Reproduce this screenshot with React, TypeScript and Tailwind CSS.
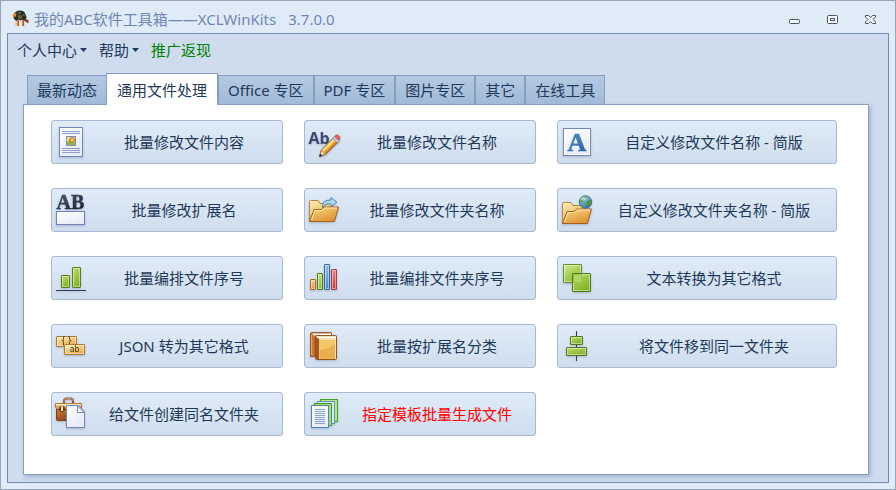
import { useState, type ReactNode } from "react";

const serif = "'Liberation Serif', serif";
const sans = "'Open Sans', 'Liberation Sans', sans-serif";
const mono = "'DejaVu Sans Mono', monospace";

function Gradients() {
  const list: [string, string, string][] = [
    ["gGold", "#fff0b8", "#e7a94a"],
    ["gAmber", "#ffd98a", "#dc9332"],
    ["gGreen", "#d3ec93", "#86b82b"],
    ["gLime", "#c0e070", "#7fb126"],
    ["gBlue", "#a9d0f2", "#4186c8"],
    ["gRed", "#f09a90", "#c8322c"],
    ["gOrange", "#ffe0b0", "#e08a30"],
    ["gPaper", "#ffffff", "#e6ebf7"],
    ["gLeather", "#d98a4c", "#8c3d16"],
    ["gInk", "#59607a", "#1c2238"],
    ["gLetter", "#5f9bd4", "#2b62a8"],
    ["gGlobe", "#b9e2f7", "#2e6da8"],
  ];
  return (
    <svg width="0" height="0" className="absolute" aria-hidden="true">
      <defs>
        {list.map(([id, from, to]) => (
          <linearGradient key={id} id={id} x1="0" y1="0" x2="0.6" y2="1">
            <stop offset="0" stopColor={from} />
            <stop offset="1" stopColor={to} />
          </linearGradient>
        ))}
      </defs>
    </svg>
  );
}

function Icon({ children }: { children: ReactNode }) {
  return (
    <svg
      width="32"
      height="32"
      viewBox="0 0 32 32"
      fill="none"
      aria-hidden="true"
      className="shrink-0 overflow-visible drop-shadow-[0_1px_1px_rgba(40,60,100,0.25)]"
    >
      {children}
    </svg>
  );
}

const DocumentIcon = () => (
  <Icon>
    <rect x="4.5" y="1.5" width="23" height="29" fill="url(#gPaper)" stroke="#7387bd" />
    <path d="M7 5.500h18M7 7.500h18M7 22.500h18M7 24.500h18M7 26.500h18" stroke="#8c9dc9" />
    <rect x="11.500" y="10.500" width="9" height="9" fill="#f6e28b" stroke="#7d8fc0" />
    <path d="M12 19v-3l3-2 2 3 3-1v3z" fill="#8fb944" />
    <circle cx="17" cy="14" r="2.600" fill="#f0a52e" stroke="#c0731c" strokeWidth="0.800" />
    <circle cx="17" cy="14" r="0.900" fill="#fff0a0" />
  </Icon>
);

const ExtensionIcon = () => (
  <Icon>
    <text x="15.500" y="15" textAnchor="middle" fontFamily={serif} fontWeight="700" fontSize="20" fill="url(#gInk)" stroke="#2c3248" strokeWidth="0.400">
      AB
    </text>
    <rect x="1.500" y="17.500" width="28" height="13" fill="url(#gPaper)" stroke="#7084b8" />
  </Icon>
);

const RenameIcon = () => (
  <Icon>
    <text x="0.500" y="17.500" fontFamily={sans} fontWeight="700" fontSize="16" fill="#3d4a6e">
      Ab
    </text>
    <path d="M11.500 30.500l1.800-6.500L26 11.500l4.500 4.300L17.800 28.200z" fill="#f5ab35" stroke="#9a5a1c" strokeWidth="0.900" />
    <path d="M14.800 25L26.800 13" stroke="#ffe39a" strokeWidth="1.800" />
    <path d="M17.500 27L29 15.800" stroke="#c9701a" strokeWidth="1.200" />
    <path d="M11.500 30.500l1.800-6.200 4.300 3.800z" fill="#f3dcb8" stroke="#8a5a30" strokeWidth="0.600" />
    <path d="M11.300 30.800l.9-3 2.200 1.900z" fill="#20263c" />
    <path d="M24.800 12.300l2-2 4.700 4.500-2 2z" fill="#c5d2ea" stroke="#7b8cb5" strokeWidth="0.800" />
    <path d="M26.800 10.300l1-1q1.600-1 3.200.6 1.700 1.800.6 3.300l-1 1.200z" fill="#ec6a5c" stroke="#b63b34" strokeWidth="0.700" />
  </Icon>
);

const FolderShape = ({ y }: { y: number }) => (
  <g transform={`translate(0 ${y})`}>
    <path d="M1.500 21.500v-20q0-1 1-1h7.500l2 3h11.500q1 0 1 1v16z" fill="url(#gGold)" stroke="#c08038" />
    <path d="M1.500 21.500L6 9.500h7l3-2.500h14.500L26.500 21.500z" fill="url(#gAmber)" stroke="#a65f1e" />
    <path d="M3.500 20l3.400-9.500h6.600l3-2.500H29" stroke="#ffeebb" strokeWidth="0.900" />
  </g>
);

const FolderArrowIcon = () => (
  <Icon>
    <FolderShape y={6} />
    <path
      d="M14.500 13.500Q14 5.500 23 6V3.500l5.800 4.700-5.800 4.500V10Q17.500 9 14.500 13.500z"
      fill="#a9dbf5"
      stroke="#4382b0"
      strokeWidth="0.900"
    />
  </Icon>
);

const FolderGlobeIcon = () => (
  <Icon>
    <FolderShape y={8} />
    <circle cx="24.500" cy="8" r="6.200" fill="url(#gGlobe)" stroke="#3d6488" strokeWidth="0.900" />
    <path d="M20 4.500q3-2.500 5.500-1.800l-.8 2.400-2.300 1-.6 2.400-2 .4q-1.400-2 .2-4.400z" fill="#62a83c" />
    <path d="M26.500 6.500l3.200-.6q1 2.200-.2 4.700l-2.300 1.800-1.600-2.600z" fill="#4d9433" />
    <path d="M21 10.500l2.600.4.300 2.600q-2-.6-2.900-3z" fill="#62a83c" />
    <ellipse cx="22.500" cy="4.800" rx="2.800" ry="1.800" fill="#ffffff" fillOpacity="0.500" />
  </Icon>
);

const LetterIcon = () => (
  <Icon>
    <rect x="2.500" y="2.500" width="27" height="27" fill="url(#gPaper)" stroke="#7387bd" />
    <rect x="3.500" y="3.500" width="25" height="25" stroke="#ffffff" />
    <text x="16" y="24.500" textAnchor="middle" fontFamily={serif} fontWeight="700" fontSize="26" fill="url(#gLetter)" stroke="#3a74b6" strokeWidth="0.600">
      A
    </text>
  </Icon>
);

type BlockProps = { x: number; y: number; w: number; h: number; fill: string; stroke: string };
const Block = ({ x, y, w, h, fill, stroke }: BlockProps) => (
  <g>
    <rect x={x + 0.5} y={y + 0.5} width={w - 1} height={h - 1} rx="0.500" fill={fill} stroke={stroke} />
    <rect x={x + 1.5} y={y + 1.5} width={w - 3} height={h - 3} stroke="#ffffff" strokeOpacity="0.450" />
  </g>
);

const TwoBarsIcon = () => (
  <Icon>
    <Block x={6} y={13} w={9} h={13} fill="url(#gLime)" stroke="#5a7f1e" />
    <Block x={17} y={5} w={9} h={21} fill="url(#gLime)" stroke="#5a7f1e" />
    <path d="M1 28.500h30" stroke="#2d3a5c" />
  </Icon>
);

const ColorBarsIcon = () => (
  <Icon>
    <Block x={2} y={17} w={6} h={11} fill="url(#gOrange)" stroke="#b8631f" />
    <Block x={9} y={11} w={6} h={17} fill="url(#gGreen)" stroke="#4f7a1a" />
    <Block x={16} y={2} w={6} h={26} fill="url(#gBlue)" stroke="#3a68a8" />
    <Block x={23} y={7} w={6} h={21} fill="url(#gRed)" stroke="#b03a38" />
  </Icon>
);

const SquaresIcon = () => (
  <Icon>
    <Block x={2} y={2} w={19} h={19} fill="url(#gGreen)" stroke="#64902a" />
    <Block x={11} y={11} w={19} h={19} fill="url(#gLime)" stroke="#4f7a1a" />
    <rect x="12.500" y="12.500" width="8" height="8" fill="#b0d367" stroke="#9cc650" />
  </Icon>
);

const JsonIcon = () => (
  <Icon>
    <Block x={1} y={6} w={21} h={11} fill="url(#gGold)" stroke="#b5782f" />
    <text x="11.500" y="14" textAnchor="middle" fontFamily={sans} fontSize="10" fill="#3c3428">
      {"{ }"}
    </text>
    <Block x={9} y={14} w={21} h={11} fill="url(#gGold)" stroke="#b5782f" />
    <text x="19.500" y="22" textAnchor="middle" fontFamily={mono} fontSize="8" fill="#3c3428">
      ab
    </text>
  </Icon>
);

const BooksIcon = () => (
  <Icon>
    <path d="M2.500 26.500V3.500q0-1 1-1h19q1 0 1 1v3H7v20z" fill="#c87a35" stroke="#9a5522" />
    <path d="M4 3.500h19v2H6z" fill="#ffffff" />
    <path d="M3.500 5v20" stroke="#e8a664" />
    <path d="M7.500 28.500V6.500q0-1 1-1h19q1 0 1 1v22q0 1-1 1h-19q-1 0-1-1z" fill="#f3c468" stroke="#9a5522" />
    <path d="M9 6.500h19v2H10z" fill="#ffffff" />
    <path d="M8 7l3 2v20H8z" fill="#a4561f" />
    <path d="M11.500 9.500H27.500V28.500" stroke="#ffe2a4" />
    <path d="M12 20q9-1 15-6v15H12z" fill="#e3a040" fillOpacity="0.600" />
  </Icon>
);

const AlignIcon = () => (
  <Icon>
    <path d="M15.500 1v30" stroke="#2d3a5c" />
    <Block x={9} y={6} w={13} h={9} fill="url(#gLime)" stroke="#4f7a1a" />
    <Block x={5} y={17} w={21} h={9} fill="url(#gLime)" stroke="#4f7a1a" />
  </Icon>
);

const BriefcaseIcon = () => (
  <Icon>
    <path d="M9 5V3q0-2.500 3-2.500h3q3 0 3 2.500v2" stroke="#8a5434" strokeWidth="2" />
    <path d="M9 4.500V3q0-2.500 3-2.500h3q3 0 3 2.500" stroke="#dba27c" strokeWidth="0.800" />
    <rect x="1.500" y="8.500" width="24" height="14" rx="1" fill="url(#gLeather)" stroke="#7f3c18" />
    <path d="M.500 5.500h26v4l-2 2H3l-2.500-2z" fill="#e2a45c" stroke="#b8783a" />
    <path d="M1 6h25v1.500H1z" fill="#ffedc0" />
    <path d="M3 11.500h22" stroke="#6a3010" />
    <circle cx="7" cy="11" r="3" fill="#6e3414" />
    <path d="M6 8.500h2v4.500H6z" fill="#fff3c0" />
    <path d="M11.500 7.500h12l6 6v16h-18z" fill="url(#gPaper)" stroke="#7387bd" />
    <path d="M22.500 8v6.500h6.500z" fill="#ffffff" stroke="#7387bd" />
  </Icon>
);

const StackIcon = () => (
  <Icon>
    <rect x="12.500" y="1.500" width="17" height="22" fill="#b7e389" stroke="#4aa026" />
    <rect x="9.500" y="3.500" width="17" height="22" fill="#d5e6f8" stroke="#6592cb" />
    <rect x="6.500" y="5.500" width="17" height="22" fill="#a4d870" stroke="#4aa026" />
    <rect x="3.500" y="7.500" width="17" height="22" fill="url(#gPaper)" stroke="#5784c0" />
    <path
      d="M7 11.500h10M7 13.500h10M7 15.500h10M7 17.500h10M7 19.500h10M7 21.500h10M7 23.500h10M7 25.500h10"
      stroke="#7fa3d2"
    />
  </Icon>
);

function AppLogo() {
  return (
    <svg width="18" height="18" viewBox="0 0 18 18" aria-hidden="true" className="shrink-0">
      <path d="M4 9l-1.500 5.500L4 16.500h2.500L7 10zM9 10l1 6.500h3L12 9z" fill="#f3c9a4" />
      <path d="M1.500 5Q3 .500 8 .500q4.500 0 5.500 4 1.500 2 .5 4.500l-2 2.500-1.500-2-2 1-2-1-2 1.500-2-1.500Q.500 7.500 1.500 5z" fill="#262b22" />
      <path d="M.500 4.500l2-2 2 1-.5 3-2.500.5z" fill="#e8873a" />
      <path d="M5.500 2l3-.5 1 1.500-3 1.500zM10.500 4l2.500.5-.5 2-2-.5z" fill="#4b6f4a" />
      <path d="M5.500 5.500l3-.5 2 2-1.500 2-3-.5z" fill="#7b5a3b" />
      <path d="M5.500 10l1.500.5v5.500H5.500zM10.500 10.500l1.500-.5v6h-1.500z" fill="#b95420" />
      <path d="M12.500 8.500l4 1.500v3h-1.500l-2.500-2.500z" fill="#8f4527" />
    </svg>
  );
}

const Caret = () => (
  <svg width="7" height="4" viewBox="0 0 7 4" aria-hidden="true" className="fill-[#1e395b]">
    <path d="M0 0h7L3.500 4z" />
  </svg>
);

const tabs = ["最新动态", "通用文件处理", "Office 专区", "PDF 专区", "图片专区", "其它", "在线工具"];

const tools: { label: string; icon: ReactNode; hot?: boolean }[] = [
  { label: "批量修改文件内容", icon: <DocumentIcon /> },
  { label: "批量修改文件名称", icon: <RenameIcon /> },
  { label: "自定义修改文件名称 - 简版", icon: <LetterIcon /> },
  { label: "批量修改扩展名", icon: <ExtensionIcon /> },
  { label: "批量修改文件夹名称", icon: <FolderArrowIcon /> },
  { label: "自定义修改文件夹名称 - 简版", icon: <FolderGlobeIcon /> },
  { label: "批量编排文件序号", icon: <TwoBarsIcon /> },
  { label: "批量编排文件夹序号", icon: <ColorBarsIcon /> },
  { label: "文本转换为其它格式", icon: <SquaresIcon /> },
  { label: "JSON 转为其它格式", icon: <JsonIcon /> },
  { label: "批量按扩展名分类", icon: <BooksIcon /> },
  { label: "将文件移到同一文件夹", icon: <AlignIcon /> },
  { label: "给文件创建同名文件夹", icon: <BriefcaseIcon /> },
  { label: "指定模板批量生成文件", icon: <StackIcon />, hot: true },
];

function TitleBar() {
  return (
    <header className="flex h-8 items-center justify-between pt-1 pr-3 pl-[5px]">
      <h1 className="flex items-center gap-1 text-[15px] leading-5 text-[#6f86b4]">
        <AppLogo />
        <span>我的ABC软件工具箱——XCLWinKits</span>
        <span className="pl-2">3.7.0.0</span>
      </h1>
      <div className="flex gap-[26px]">
        <button type="button" aria-label="最小化">
          <svg width="12" height="12" viewBox="0 0 12 12" fill="#f4f8fd" stroke="#4a5263">
            <rect x="0.500" y="6.500" width="10" height="4" rx="1" />
          </svg>
        </button>
        <button type="button" aria-label="最大化">
          <svg width="12" height="12" viewBox="0 0 12 12" fill="#f4f8fd" stroke="#4a5263">
            <rect x="0.500" y="2.500" width="10" height="8" rx="1" />
            <rect x="3.500" y="5.500" width="4" height="2" />
          </svg>
        </button>
        <button type="button" aria-label="关闭">
          <svg width="12" height="12" viewBox="0 0 12 12" fill="#f4f8fd" stroke="#4a5263">
            <path d="M.500 2.500h3l2 2 2-2h3v1.500L8 6.500l2.500 2.500v1.500h-3l-2-2-2 2h-3V9L3 6.500.500 4z" />
          </svg>
        </button>
      </div>
    </header>
  );
}

export default function App() {
  const [active, setActive] = useState(1);
  return (
    <div className="flex min-h-screen flex-col border border-[#98a7b8] bg-[#dfebf7] px-1.5 pb-1.5 font-['Noto_Sans','Noto_Sans_CJK_SC',sans-serif] text-[15px] leading-5 text-[#1e395b]">
      <Gradients />
      <TitleBar />
      <main className="flex flex-1 flex-col border border-[#6f8db3] bg-[#cfdcee] pr-[19px] pb-[7px] pl-[15px]">
        <nav className="-ml-1.5 flex h-8 items-center gap-3">
          <button type="button" className="flex items-center gap-[3px]">
            个人中心 <Caret />
          </button>
          <button type="button" className="flex items-center gap-[3px]">
            帮助 <Caret />
          </button>
          <a href="#promo" className="text-[#008000]">
            推广返现
          </a>
        </nav>
        <div role="tablist" className="relative mt-[7px] -mb-px flex h-8 items-end pl-1">
          {tabs.map((tab, i) => (
            <button
              key={tab}
              type="button"
              role="tab"
              aria-selected={i === active}
              onClick={() => setActive(i)}
              className={
                i === active
                  ? "-ml-px h-8 whitespace-nowrap border border-b-0 border-[#859ebf] bg-white px-2.5"
                  : "h-[30px] whitespace-nowrap border border-[#859ebf] bg-linear-to-b from-[#b4cae2] to-[#a2b9d7] px-[9px]"
              }
            >
              {tab}
            </button>
          ))}
        </div>
        <section
          role="tabpanel"
          className="grid flex-1 grid-cols-[232fr_232fr_280fr] content-start gap-x-[21px] gap-y-6 border border-[#859ebf] bg-white pt-[15px] pr-[31px] pb-6 pl-[27px] shadow-[2px_2px_4px_rgba(80,110,150,0.35)]"
        >
          {tools.map((tool) => (
            <button
              key={tool.label}
              type="button"
              className="flex h-11 items-center rounded-[3px] border border-[#a8b8d2] bg-linear-to-b from-[#dfebf8] to-[#cfdded] pr-px pl-[3px]"
            >
              {tool.icon}
              <span className={tool.hot ? "flex-1 whitespace-nowrap text-[#ff0000]" : "flex-1 whitespace-nowrap"}>
                {tool.label}
              </span>
            </button>
          ))}
        </section>
      </main>
    </div>
  );
}
